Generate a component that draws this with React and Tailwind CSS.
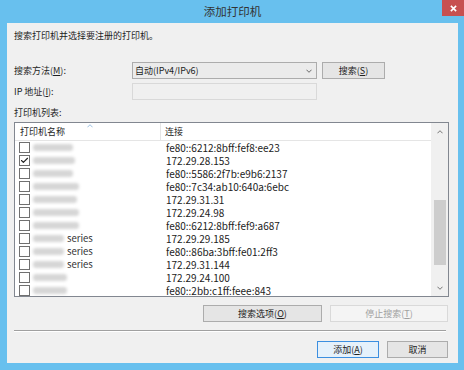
import { Check } from "lucide-react";

const rows = [
  { w: "w-[40px]", addr: "fe80::6212:8bff:fef8:ee23" },
  { w: "w-[42px]", addr: "172.29.28.153", checked: true },
  { w: "w-[40px]", addr: "fe80::5586:2f7b:e9b6:2137" },
  { w: "w-[46px]", addr: "fe80::7c34:ab10:640a:6ebc" },
  { w: "w-[44px]", addr: "172.29.31.31" },
  { w: "w-[46px]", addr: "172.29.24.98" },
  { w: "w-[46px]", addr: "fe80::6212:8bff:fef9:a687" },
  { w: "w-[31px]", addr: "172.29.29.185", series: true },
  { w: "w-[31px]", addr: "fe80::86ba:3bff:fe01:2ff3", series: true },
  { w: "w-[31px]", addr: "172.29.31.144", series: true },
  { w: "w-[34px]", addr: "172.29.24.100" },
  { w: "w-[34px]", addr: "fe80::2bb:c1ff:feee:843" },
];

function Button({ children, className = "", disabled, primary }) {
  return (
    <button
      type="button"
      className={`flex h-[17px] items-center justify-center border text-[9px] leading-none ${
        disabled
          ? "border-[#d9d9d9] bg-[#f4f4f4] text-[#a0a0a0]"
          : primary
          ? "border-[#3c8fe0] bg-[#e5f1fb] text-[#222]"
          : "border-[#acacac] bg-[#e5e5e5] text-[#222]"
      } ${className}`}
    >
      {children}
    </button>
  );
}

function Box({ checked }) {
  return (
    <span className="flex h-[11px] w-[11px] shrink-0 items-center justify-center border border-[#707070] bg-white">
      {checked && <Check size={9} strokeWidth={3} className="text-[#222]" />}
    </span>
  );
}

export default function App() {
  return (
    <div className="h-[370px] w-[464px] bg-[#68c0ee] pl-[7px] pr-[6px] font-['Noto_Sans_CJK_SC',sans-serif] text-[#1e1e1e]">
      <div className="relative flex h-[23px] items-center justify-center">
        <span className="text-[11.5px] leading-none text-[#333]">添加打印机</span>
        <div className="absolute right-[-6px] top-0 flex h-[16px] w-[22px] items-center justify-center bg-[#c75050]">
          <svg width="7" height="7" viewBox="0 0 8 8">
            <path d="M1 1L7 7M7 1L1 7" stroke="#fff" strokeWidth="1.8" />
          </svg>
        </div>
      </div>

      <div className="flex h-[340px] flex-col bg-[#f0f0f0] px-[7px] pt-[5px] text-[9px]">
        <div className="h-[16px] leading-[16px]">搜索打印机并选择要注册的打印机。</div>

        <div className="mt-[18px] flex items-center">
          <span className="w-[118px] leading-[16px]">
            搜索方法(<span className="underline">M</span>):
          </span>
          <div className="flex h-[17px] w-[185px] items-center justify-between border border-[#acacac] bg-[#ebebeb] pl-[2px] pr-[4px]">
            <span className="leading-none">自动(IPv4/IPv6)</span>
            <svg width="6" height="4" viewBox="0 0 7 4">
              <path d="M0.5 0.5L3.5 3.5L6.5 0.5" stroke="#555" fill="none" />
            </svg>
          </div>
          <Button className="ml-[5px] w-[63px]">
            搜索(<span className="underline">S</span>)
          </Button>
        </div>

        <div className="mt-[4px] flex items-center">
          <span className="w-[118px] leading-[16px]">
            IP 地址(<span className="underline">I</span>):
          </span>
          <div className="h-[17px] w-[185px] border border-[#d9d9d9] bg-[#f0f0f0]" />
        </div>

        <div className="mt-[5px] h-[16px] leading-[16px]">打印机列表:</div>

        <div className="mt-[1px] flex h-[175px] w-[435px] overflow-hidden border border-[#828790] bg-white">
          <div className="flex flex-1 flex-col">
            <div className="flex h-[18px] shrink-0 items-center border-b border-[#e5e5e5] leading-[16px]">
              <div className="relative flex h-full w-[146px] items-center border-r border-[#e5e5e5] pl-[5px]">
                打印机名称
                <svg className="absolute left-[72px] top-[1px]" width="6" height="4" viewBox="0 0 7 4">
                  <path d="M0.5 3.5L3.5 0.5L6.5 3.5" stroke="#8cb6de" fill="none" />
                </svg>
              </div>
              <div className="pl-[4px]">连接</div>
            </div>
            {rows.map((r, i) => (
              <div key={i} className="flex h-[13px] shrink-0 items-center leading-none">
                <div className="flex w-[146px] items-center pl-[4px]">
                  <Box checked={r.checked} />
                  <span className={`ml-[3px] ${r.w} h-[7px] rounded-[3px] bg-[#d6d6d6] blur-[1.5px]`} />
                  {r.series && <span className="ml-[3px] text-[9.5px] text-[#333]">series</span>}
                </div>
                <div className="pl-[5px] text-[10px] text-[#222]">{r.addr}</div>
              </div>
            ))}
          </div>
          <div className="flex w-[17px] shrink-0 flex-col items-center bg-[#f0f0f0]">
            <div className="flex h-[17px] items-center justify-center">
              <svg width="6" height="4" viewBox="0 0 7 4">
                <path d="M0.5 3.5L3.5 0.5L6.5 3.5" stroke="#606060" fill="none" />
              </svg>
            </div>
            <div className="mt-[60px] h-[65px] w-[12px] bg-[#cdcdcd]" />
            <div className="mt-auto flex h-[17px] items-center justify-center">
              <svg width="6" height="4" viewBox="0 0 7 4">
                <path d="M0.5 0.5L3.5 3.5L6.5 0.5" stroke="#606060" fill="none" />
              </svg>
            </div>
          </div>
        </div>

        <div className="mt-[8px] flex justify-end pr-[3px]">
          <Button className="w-[119px]">
            搜索选项(<span className="underline">O</span>)
          </Button>
          <Button disabled className="ml-[8px] w-[118px]">
            停止搜索(<span className="underline">T</span>)
          </Button>
        </div>

        <div className="mt-[8px] mr-[5px] h-[2px] border-t border-b border-t-[#a0a0a0] border-b-white" />

        <div className="mt-[9px] flex justify-end pr-[3px]">
          <Button primary className="w-[62px]">
            添加(<span className="underline">A</span>)
          </Button>
          <Button className="ml-[8px] w-[61px]">取消</Button>
        </div>
      </div>
    </div>
  );
}
